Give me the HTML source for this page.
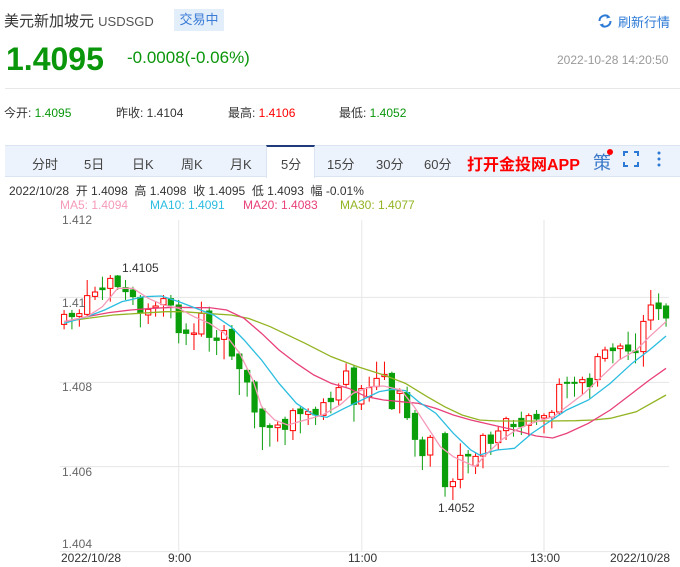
<!DOCTYPE html>
<html><head><meta charset="utf-8"><style>
*{margin:0;padding:0;box-sizing:border-box}
body{width:680px;height:567px;overflow:hidden;background:#fff;font-family:"Liberation Sans","Noto Sans CJK SC",sans-serif;position:relative;color:#333}
.a{position:absolute;white-space:nowrap}
svg *{vector-effect:non-scaling-stroke}
</style></head><body>
<div class="a" style="left:4px;top:10px;font-size:15px;color:#333">美元新加坡元 <span style="font-size:13px;color:#555">USDSGD</span></div>
<div class="a" style="left:174px;top:9px;width:50px;height:22px;background:#e3eefb;color:#3a7bd5;font-size:13px;line-height:22px;text-align:center">交易中</div>
<svg class="a" style="left:597px;top:13px" width="16" height="16" viewBox="0 0 16 16"><path d="M2.5 8a5.5 5.5 0 0 1 9.5-3.8" fill="none" stroke="#2d7ad6" stroke-width="2"/><path d="M13.5 8a5.5 5.5 0 0 1-9.5 3.8" fill="none" stroke="#2d7ad6" stroke-width="2"/><path d="M10 1.5l3.5 3-4 1z" fill="#2d7ad6"/><path d="M6 14.5l-3.5-3 4-1z" fill="#2d7ad6"/></svg>
<div class="a" style="left:618px;top:12px;font-size:13px;color:#2d7ad6">刷新行情</div>
<div class="a" style="left:6px;top:41px;font-size:32px;font-weight:bold;color:#0a960a">1.4095</div>
<div class="a" style="left:127px;top:48px;font-size:17px;color:#0a960a">-0.0008(-0.06%)</div>
<div class="a" style="left:557px;top:53px;font-size:12px;color:#999">2022-10-28 14:20:50</div>
<div class="a" style="left:5px;top:88px;width:675px;height:1px;background:#e8e8e8"></div>
<div class="a" style="left:4px;top:104px;font-size:12px;color:#333">今开: <span style="color:#0a960a">1.4095</span></div>
<div class="a" style="left:116px;top:104px;font-size:12px;color:#333">昨收: 1.4104</div>
<div class="a" style="left:228px;top:104px;font-size:12px;color:#333">最高: <span style="color:#f00">1.4106</span></div>
<div class="a" style="left:339px;top:104px;font-size:12px;color:#333">最低: <span style="color:#0a960a">1.4052</span></div>
<div class="a" style="left:5px;top:145px;width:675px;height:32px;background:#edf3fc;border-top:1px solid #dae4f3;border-bottom:1px solid #dae4f3"></div>
<div class="a" style="left:266px;top:145px;width:49px;height:33px;background:#fff;border-top:2px solid #1f3a7a;border-left:1px solid #dae4f3;border-right:1px solid #dae4f3"></div>
<div class="a" style="top:154px;left:0;font-size:13px;color:#444">
<span class="a" style="left:32px">分时</span><span class="a" style="left:84px">5日</span><span class="a" style="left:132px">日K</span><span class="a" style="left:181px">周K</span><span class="a" style="left:230px">月K</span><span class="a" style="left:281px">5分</span><span class="a" style="left:327px">15分</span><span class="a" style="left:376px">30分</span><span class="a" style="left:424px">60分</span></div>
<div class="a" style="left:467px;top:151px;font-size:16px;font-weight:bold;color:#f00">打开金投网APP</div>
<div class="a" style="left:593px;top:149px;font-size:18px;color:#3a78c8">策</div>
<div class="a" style="left:607px;top:149px;width:6px;height:6px;border-radius:3px;background:#f00"></div>
<svg class="a" style="left:623px;top:151px" width="16" height="16" viewBox="0 0 16 16" fill="none" stroke="#2d7ad6" stroke-width="2"><path d="M1 5V1h4M11 1h4v4M15 11v4h-4M5 15H1v-4"/></svg>
<svg class="a" style="left:656px;top:151px" width="6" height="16"><circle cx="3" cy="2" r="1.5" fill="#2d7ad6"/><circle cx="3" cy="8" r="1.5" fill="#2d7ad6"/><circle cx="3" cy="14" r="1.5" fill="#2d7ad6"/></svg>
<div class="a" style="left:9px;top:182px;font-size:12px;color:#333">2022/10/28&nbsp; 开 1.4098&nbsp; 高 1.4098&nbsp; 收 1.4095&nbsp; 低 1.4093&nbsp; 幅 -0.01%</div>
<div class="a" style="left:60px;top:198px;font-size:12px;color:#f59ab8">MA5: 1.4094</div>
<div class="a" style="left:150px;top:198px;font-size:12px;color:#2bbde0">MA10: 1.4091</div>
<div class="a" style="left:243px;top:198px;font-size:12px;color:#e8417a">MA20: 1.4083</div>
<div class="a" style="left:340px;top:198px;font-size:12px;color:#92b423">MA30: 1.4077</div>
<svg class="a" style="left:0;top:220px" width="680" height="347" viewBox="0 0 1560 1041" preserveAspectRatio="none">
<g stroke="#e6e6e6" stroke-width="1">
<line x1="137" y1="-20" x2="1535" y2="-20"/>
<line x1="137" y1="232" x2="1535" y2="232"/>
<line x1="137" y1="487" x2="1535" y2="487"/>
<line x1="137" y1="740" x2="1535" y2="740"/>
<line x1="137" y1="995" x2="1535" y2="995"/>
<line x1="410" y1="-20" x2="410" y2="995"/>
<line x1="830" y1="-20" x2="830" y2="995"/>
<line x1="1248" y1="-20" x2="1248" y2="995"/>
</g>
<g stroke-width="1">
<g stroke="#f00" fill="#fff">
<line x1="147" y1="270" x2="147" y2="328"/><rect x="141" y="283" width="12" height="30"/>
<line x1="182" y1="268" x2="182" y2="320"/><rect x="176" y="281" width="12" height="8"/>
<line x1="200" y1="180" x2="200" y2="290"/><rect x="194" y="227" width="12" height="56"/>
<line x1="218" y1="200" x2="218" y2="240"/><rect x="212" y="216" width="12" height="13"/>
<line x1="253" y1="165" x2="253" y2="245"/><rect x="247" y="175" width="12" height="30"/>
<line x1="340" y1="250" x2="340" y2="312"/><rect x="334" y="268" width="12" height="17"/>
<line x1="357" y1="245" x2="357" y2="290"/><rect x="351" y="258" width="12" height="5"/>
<line x1="375" y1="225" x2="375" y2="290"/><rect x="369" y="236" width="12" height="18"/>
<line x1="445" y1="310" x2="445" y2="390"/><rect x="439" y="339" width="12" height="4"/>
<line x1="462" y1="245" x2="462" y2="350"/><rect x="456" y="280" width="12" height="62"/>
<line x1="514" y1="315" x2="514" y2="418"/><rect x="508" y="332" width="12" height="26"/>
<line x1="637" y1="605" x2="637" y2="665"/><rect x="631" y="615" width="12" height="8"/>
<line x1="672" y1="565" x2="672" y2="660"/><rect x="666" y="572" width="12" height="60"/>
<line x1="707" y1="565" x2="707" y2="615"/><rect x="701" y="575" width="12" height="8"/>
<line x1="742" y1="535" x2="742" y2="600"/><rect x="736" y="548" width="12" height="38"/>
<line x1="777" y1="490" x2="777" y2="555"/><rect x="771" y="503" width="12" height="37"/>
<line x1="794" y1="430" x2="794" y2="500"/><rect x="788" y="453" width="12" height="40"/>
<line x1="829" y1="495" x2="829" y2="570"/><rect x="823" y="506" width="12" height="46"/>
<line x1="847" y1="470" x2="847" y2="545"/><rect x="841" y="503" width="12" height="27"/>
<line x1="864" y1="425" x2="864" y2="510"/><rect x="858" y="475" width="12" height="25"/>
<line x1="882" y1="425" x2="882" y2="480"/><rect x="876" y="463" width="12" height="7"/>
<line x1="917" y1="505" x2="917" y2="580"/><rect x="911" y="513" width="12" height="7"/>
<line x1="987" y1="645" x2="987" y2="740"/><rect x="981" y="652" width="12" height="53"/>
<line x1="1039" y1="775" x2="1039" y2="840"/><rect x="1033" y="785" width="12" height="15"/>
<line x1="1056" y1="670" x2="1056" y2="805"/><rect x="1050" y="706" width="12" height="72"/>
<line x1="1091" y1="700" x2="1091" y2="762"/><rect x="1085" y="709" width="12" height="29"/>
<line x1="1108" y1="640" x2="1108" y2="745"/><rect x="1102" y="646" width="12" height="62"/>
<line x1="1143" y1="620" x2="1143" y2="690"/><rect x="1137" y="633" width="12" height="35"/>
<line x1="1161" y1="590" x2="1161" y2="660"/><rect x="1155" y="596" width="12" height="36"/>
<line x1="1213" y1="580" x2="1213" y2="650"/><rect x="1207" y="587" width="12" height="29"/>
<line x1="1248" y1="580" x2="1248" y2="640"/><rect x="1242" y="587" width="12" height="7"/>
<line x1="1266" y1="570" x2="1266" y2="625"/><rect x="1260" y="577" width="12" height="14"/>
<line x1="1283" y1="475" x2="1283" y2="585"/><rect x="1277" y="493" width="12" height="83"/>
<line x1="1336" y1="470" x2="1336" y2="525"/><rect x="1330" y="479" width="12" height="9"/>
<line x1="1371" y1="400" x2="1371" y2="500"/><rect x="1365" y="410" width="12" height="69"/>
<line x1="1388" y1="380" x2="1388" y2="425"/><rect x="1382" y="390" width="12" height="25"/>
<line x1="1423" y1="370" x2="1423" y2="420"/><rect x="1417" y="378" width="12" height="8"/>
<line x1="1476" y1="285" x2="1476" y2="440"/><rect x="1470" y="304" width="12" height="91"/>
<line x1="1493" y1="210" x2="1493" y2="330"/><rect x="1487" y="255" width="12" height="45"/>
</g>
<g stroke="#0a9e0a" fill="#0a9e0a">
<line x1="165" y1="270" x2="165" y2="328"/><rect x="159" y="280" width="12" height="10"/>
<line x1="235" y1="170" x2="235" y2="240"/><rect x="229" y="204" width="12" height="5"/>
<line x1="270" y1="165" x2="270" y2="210"/><rect x="264" y="168" width="12" height="32"/>
<line x1="288" y1="180" x2="288" y2="240"/><rect x="282" y="203" width="12" height="12"/>
<line x1="305" y1="200" x2="305" y2="255"/><rect x="299" y="210" width="12" height="20"/>
<line x1="322" y1="225" x2="322" y2="322"/><rect x="316" y="232" width="12" height="46"/>
<line x1="392" y1="225" x2="392" y2="295"/><rect x="386" y="236" width="12" height="19"/>
<line x1="410" y1="240" x2="410" y2="370"/><rect x="404" y="255" width="12" height="83"/>
<line x1="427" y1="310" x2="427" y2="375"/><rect x="421" y="330" width="12" height="10"/>
<line x1="480" y1="260" x2="480" y2="395"/><rect x="474" y="273" width="12" height="79"/>
<line x1="497" y1="330" x2="497" y2="405"/><rect x="491" y="354" width="12" height="7"/>
<line x1="532" y1="315" x2="532" y2="420"/><rect x="526" y="328" width="12" height="80"/>
<line x1="549" y1="395" x2="549" y2="525"/><rect x="543" y="402" width="12" height="44"/>
<line x1="567" y1="445" x2="567" y2="530"/><rect x="561" y="451" width="12" height="35"/>
<line x1="584" y1="480" x2="584" y2="625"/><rect x="578" y="486" width="12" height="90"/>
<line x1="602" y1="560" x2="602" y2="690"/><rect x="596" y="567" width="12" height="53"/>
<line x1="619" y1="610" x2="619" y2="680"/><rect x="613" y="617" width="12" height="5"/>
<line x1="654" y1="590" x2="654" y2="675"/><rect x="648" y="598" width="12" height="30"/>
<line x1="689" y1="560" x2="689" y2="640"/><rect x="683" y="567" width="12" height="14"/>
<line x1="724" y1="560" x2="724" y2="615"/><rect x="718" y="568" width="12" height="17"/>
<line x1="759" y1="515" x2="759" y2="580"/><rect x="753" y="535" width="12" height="10"/>
<line x1="812" y1="435" x2="812" y2="605"/><rect x="806" y="444" width="12" height="109"/>
<line x1="899" y1="455" x2="899" y2="570"/><rect x="893" y="460" width="12" height="106"/>
<line x1="934" y1="500" x2="934" y2="600"/><rect x="928" y="518" width="12" height="75"/>
<line x1="952" y1="570" x2="952" y2="710"/><rect x="946" y="580" width="12" height="78"/>
<line x1="969" y1="650" x2="969" y2="750"/><rect x="963" y="660" width="12" height="47"/>
<line x1="1021" y1="635" x2="1021" y2="830"/><rect x="1015" y="641" width="12" height="159"/>
<line x1="1074" y1="690" x2="1074" y2="760"/><rect x="1068" y="703" width="12" height="5"/>
<line x1="1126" y1="635" x2="1126" y2="705"/><rect x="1120" y="645" width="12" height="25"/>
<line x1="1178" y1="600" x2="1178" y2="650"/><rect x="1172" y="613" width="12" height="7"/>
<line x1="1196" y1="575" x2="1196" y2="645"/><rect x="1190" y="595" width="12" height="25"/>
<line x1="1231" y1="570" x2="1231" y2="615"/><rect x="1225" y="583" width="12" height="14"/>
<line x1="1301" y1="470" x2="1301" y2="535"/><rect x="1295" y="487" width="12" height="3"/>
<line x1="1318" y1="470" x2="1318" y2="530"/><rect x="1312" y="487" width="12" height="3"/>
<line x1="1353" y1="460" x2="1353" y2="535"/><rect x="1347" y="475" width="12" height="25"/>
<line x1="1406" y1="370" x2="1406" y2="430"/><rect x="1400" y="384" width="12" height="8"/>
<line x1="1441" y1="335" x2="1441" y2="420"/><rect x="1435" y="375" width="12" height="18"/>
<line x1="1458" y1="340" x2="1458" y2="430"/><rect x="1452" y="393" width="12" height="5"/>
<line x1="1511" y1="220" x2="1511" y2="300"/><rect x="1505" y="249" width="12" height="17"/>
<line x1="1528" y1="250" x2="1528" y2="320"/><rect x="1522" y="258" width="12" height="36"/>
</g>
</g>
<g fill="none" stroke-width="1.3">
<polyline stroke="#92b423" points="147,305 200,295 260,285 320,280 380,275 420,275 470,280 530,285 570,295 620,320 700,370 760,410 820,440 880,465 930,490 980,530 1020,560 1060,585 1100,600 1140,603 1200,603 1260,603 1320,602 1360,600 1400,595 1460,575 1528,525"/>
<polyline stroke="#e8417a" points="147,305 200,290 250,278 300,270 350,265 400,262 450,263 480,263 520,270 560,295 600,340 640,390 680,430 720,465 760,490 800,505 840,530 880,540 920,545 960,550 1000,565 1040,585 1080,600 1130,615 1180,630 1230,648 1268,654 1300,640 1350,610 1400,570 1450,520 1490,480 1528,445"/>
<polyline stroke="#2bbde0" points="147,310 200,290 240,270 280,245 330,230 370,228 410,245 450,265 490,285 530,320 560,360 600,420 640,490 680,550 720,585 750,592 790,565 830,540 870,515 900,508 930,512 960,545 1000,580 1040,640 1080,690 1100,705 1140,690 1180,685 1220,640 1260,605 1300,570 1350,540 1400,490 1450,430 1490,390 1528,348"/>
<polyline stroke="#f59ab8" points="147,305 200,290 235,260 270,205 305,205 340,235 375,255 410,265 445,290 480,310 515,340 550,400 580,480 600,560 630,600 660,615 700,600 740,585 780,555 810,520 850,500 880,498 920,510 950,560 980,620 1010,680 1040,710 1090,740 1110,710 1150,660 1190,625 1230,605 1270,590 1300,560 1340,520 1380,470 1420,420 1460,390 1490,350 1528,305"/>
</g>
</svg>
<div class="a" style="left:62px;top:213px;font-size:12px;color:#666">1.412</div>
<div class="a" style="left:62px;top:296px;font-size:12px;color:#666">1.41</div>
<div class="a" style="left:62px;top:380px;font-size:12px;color:#666">1.408</div>
<div class="a" style="left:62px;top:465px;font-size:12px;color:#666">1.406</div>
<div class="a" style="left:62px;top:537px;font-size:12px;color:#666">1.404</div>
<div class="a" style="left:122px;top:261px;font-size:12px;color:#333">1.4105</div>
<div class="a" style="left:438px;top:501px;font-size:12px;color:#333">1.4052</div>
<div class="a" style="left:61px;top:551px;font-size:12px;color:#333">2022/10/28</div>
<div class="a" style="left:168px;top:551px;font-size:12px;color:#333">9:00</div>
<div class="a" style="left:348px;top:551px;font-size:12px;color:#333">11:00</div>
<div class="a" style="left:530px;top:551px;font-size:12px;color:#333">13:00</div>
<div class="a" style="left:610px;top:551px;font-size:12px;color:#333">2022/10/28</div>
</body></html>
